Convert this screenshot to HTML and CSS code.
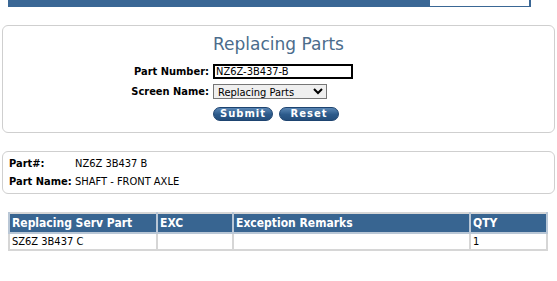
FILE: index.html
```html
<!DOCTYPE html>
<html>

<head>
    <meta charset="UTF-8">
    <title>Replacing Parts</title>
    <link rel="stylesheet" href="styles.css">
</head>

<body>
    <!-- top menu bar, page is scrolled so only its bottom edge shows -->
    <div class="topbar">
        <div class="topbar-box"></div>
    </div>

    <div class="panel search">
        <h2 class="title">Replacing Parts</h2>
        <form class="search-form">
            <label class="field-label">Part Number:</label>
            <div><input type="text" class="part-input" value="NZ6Z-3B437-B"></div>
            <label class="field-label">Screen Name:</label>
            <div>
                <select class="screen-select">
                    <option>Replacing Parts</option>
                </select>
            </div>
            <span></span>
            <div class="buttons">
                <button type="button" class="pill">Submit</button>
                <button type="reset" class="pill">Reset</button>
            </div>
        </form>
    </div>

    <div class="panel info">
        <div class="info-row"><span class="info-label">Part#:</span><span>NZ6Z 3B437 B</span></div>
        <div class="info-row"><span class="info-label">Part Name:</span><span>SHAFT - FRONT AXLE</span></div>
    </div>

    <table class="results">
        <tr>
            <th class="col-part">Replacing Serv Part</th>
            <th class="col-exc">EXC</th>
            <th class="col-remarks">Exception Remarks</th>
            <th class="col-qty">QTY</th>
        </tr>
        <tr>
            <td>SZ6Z 3B437 C</td>
            <td></td>
            <td></td>
            <td>1</td>
        </tr>
    </table>
</body>

</html>
```

FILE: styles.css
```css
body {
    margin: 0;
    background-color: #FFFFFF;
    font-family: "DejaVu Sans Condensed", "DejaVu Sans", Tahoma, sans-serif;
    font-size: 11px;
    color: #000000;
}

.topbar {
    background-color: #3A6795;
    height: 7px;
    margin-left: 8px;
    width: 523px;
    display: flex;
    justify-content: flex-end;
}

.topbar-box {
    background-color: #FFFFFF;
    width: 99px;
    height: 6px;
    margin-right: 2px;
}

.panel {
    border: 1px solid #CFCFCF;
    border-radius: 6px;
    margin: 0 2px;
}

.search {
    margin-top: 18px;
    height: 106px;
}

.title {
    font-family: "DejaVu Sans", Verdana, sans-serif;
    font-weight: normal;
    font-size: 17px;
    color: #4B6C8C;
    text-align: center;
    margin: 8px 0 0 0;
    height: 30px;
}

.search-form {
    display: grid;
    grid-template-columns: 206px 1fr;
    column-gap: 4px;
    row-gap: 5px;
    align-items: center;
}

.field-label {
    font-weight: bold;
    text-align: right;
}

.part-input {
    font-family: "DejaVu Sans Condensed", "DejaVu Sans", Tahoma, sans-serif;
    font-size: 11px;
    width: 135px;
    height: 11px;
    padding: 0 0 0 1px;
    border: 2px solid #000000;
    margin: 0;
    display: block;
}

.screen-select {
    font-family: "DejaVu Sans Condensed", "DejaVu Sans", Tahoma, sans-serif;
    font-size: 11px;
    width: 114px;
    height: 15px;
    padding: 0;
    margin: 0;
    border: 1px solid #767676;
    display: block;
}

.buttons {
    display: flex;
    gap: 6px;
    margin-top: 3px;
}

.pill {
    font-family: "DejaVu Sans", Verdana, sans-serif;
    font-size: 10px;
    font-weight: bold;
    color: #FFFFFF;
    background: linear-gradient(#5A86B4, #2C5A8A 55%, #244E7C);
    border: 1px solid #1E4470;
    border-radius: 7px;
    width: 60px;
    height: 14px;
    padding: 0;
    letter-spacing: 1px;
    line-height: 12px;
}

.info {
    margin-top: 18px;
    height: 41px;
    padding: 0 6px;
}

.info-row {
    display: flex;
    margin-top: 5px;
    height: 13px;
    line-height: 13px;
}

.info-label {
    font-weight: bold;
    width: 66px;
}

.results {
    margin: 18px 0 0 8px;
    width: 540px;
    border-collapse: collapse;
    border: 2px solid #D6D6D6;
}

.results th {
    background-color: #386591;
    color: #FFFFFF;
    font-size: 12px;
    text-align: left;
    padding: 0 2px;
    height: 18px;
    border: 2px solid #B9C7D6;
    border-top: 0;
}

.results td {
    font-size: 11px;
    padding: 0 2px;
    height: 15px;
    border: 2px solid #D6D6D6;
}

.col-part {
    width: 142px;
}

.col-exc {
    width: 70px;
}

.col-remarks {
    width: 231px;
}
```
